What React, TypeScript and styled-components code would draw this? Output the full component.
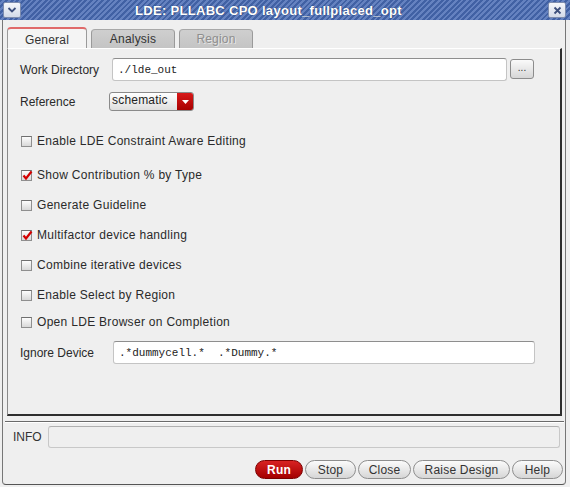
import React from 'react';
import styled, { createGlobalStyle } from 'styled-components';

const GlobalStyle = createGlobalStyle`
  html, body {
    margin: 0;
    padding: 0;
    background: #efefef;
  }
  body {
    font-family: 'Liberation Sans', Arial, sans-serif;
    font-size: 12px;
    color: #222;
  }
`;

const Window = styled.div`
  width: 570px;
  height: 487px;
  display: flex;
  flex-direction: column;
  background: #efefef;
  overflow: hidden;
`;

const TitleBar = styled.div`
  height: 20px;
  flex: none;
  display: flex;
  align-items: center;
  justify-content: space-between;
  padding: 0 4px 0 3px;
  background: repeating-linear-gradient(135deg, #4161a4 0 2px, #6582c0 2px 4px);
`;

const TitleText = styled.div`
  flex: 1;
  text-align: center;
  padding-right: 32px;
  color: #fff;
  font-weight: bold;
  font-size: 13px;
  letter-spacing: 0.3px;
  text-shadow: 0 0 1px #1c2f5a;
`;

const TitleButton = styled.div`
  width: 16px;
  height: 14px;
  border: 1px solid #7d8cae;
  border-radius: 2px;
  background: linear-gradient(#f5f7fb, #d3dae8);
  display: flex;
  align-items: center;
  justify-content: center;
`;

const Body = styled.div`
  flex: 1;
  margin: 0 4px 2px 2px;
  border-left: 1px solid #777;
  border-right: 1px solid #777;
  border-bottom: 1px solid #555;
  border-radius: 0 0 4px 4px;
  display: flex;
  flex-direction: column;
`;

const TabArea = styled.div`
  padding: 7px 3px 0 4px;
`;

const TabRow = styled.div`
  display: flex;
  align-items: flex-end;
  gap: 4px;
  height: 21px;
`;

const Tab = styled.div<{ $active?: boolean; $disabled?: boolean; $w: number }>`
  width: ${({ $w }) => $w}px;
  height: ${({ $active }) => ($active ? 21 : 19)}px;
  box-sizing: border-box;
  display: flex;
  align-items: center;
  justify-content: center;
  padding-top: ${({ $active }) => ($active ? 2 : 0)}px;
  border: 1px solid #9a9a9a;
  border-bottom: none;
  border-top: ${({ $active }) => ($active ? '2px solid #e06a6a' : '1px solid #a8a8a8')};
  border-radius: 4px 4px 0 0;
  background: ${({ $active }) => ($active ? '#f4f4f4' : 'linear-gradient(#cfcfcf, #c4c4c4)')};
  color: ${({ $disabled }) => ($disabled ? '#8e8e8e' : '#333')};
  text-shadow: ${({ $disabled }) => ($disabled ? '1px 1px 0 #e6e6e6' : 'none')};
  letter-spacing: 0.2px;
`;

const Panel = styled.div`
  height: 368px;
  box-sizing: border-box;
  border-top: 1px solid #fff;
  border-left: 1px solid #8a8a8a;
  border-right: 2px solid #2e2e2e;
  border-bottom: 2px solid #2e2e2e;
  padding: 9px 12px 0 12px;
  display: flex;
  flex-direction: column;
`;

const FieldRow = styled.div<{ $mt?: number }>`
  display: flex;
  align-items: center;
  margin-top: ${({ $mt }) => $mt ?? 0}px;
`;

const Label = styled.div<{ $w: number }>`
  width: ${({ $w }) => $w}px;
  flex: none;
  color: #2a2a2a;
`;

const TextInput = styled.div<{ $w: number }>`
  width: ${({ $w }) => $w}px;
  height: 23px;
  box-sizing: border-box;
  border: 1px solid #c4c4c4;
  border-top-color: #8e8e8e;
  border-radius: 3px;
  background: #fff;
  padding-left: 5px;
  display: flex;
  align-items: center;
  font-family: 'Liberation Mono', 'Courier New', monospace;
  font-size: 11px;
  color: #222;
  white-space: pre;
`;

const SmallButton = styled.div`
  width: 24px;
  height: 20px;
  box-sizing: border-box;
  margin-left: 3px;
  align-self: flex-start;
  margin-top: 1px;
  border: 1px solid #8c8c8c;
  border-radius: 3px;
  background: linear-gradient(#fafafa, #d6d6d6);
  display: flex;
  align-items: center;
  justify-content: center;
  font-size: 10px;
  color: #333;
  padding-bottom: 3px;
`;

const Select = styled.div`
  width: 85px;
  height: 19px;
  box-sizing: border-box;
  border: 1px solid #8a8a8a;
  border-radius: 3px;
  background: linear-gradient(#ffffff, #dedede);
  display: flex;
  overflow: hidden;
`;

const SelectText = styled.div`
  flex: 1;
  padding-left: 2px;
  line-height: 15px;
  color: #222;
  letter-spacing: 0.2px;
`;

const SelectArrow = styled.div`
  width: 16px;
  background: linear-gradient(#d81a1a, #a80000);
  display: flex;
  align-items: center;
  justify-content: center;
`;

const CheckRow = styled.div<{ $mt?: number }>`
  height: 30px;
  display: flex;
  align-items: center;
  gap: 5px;
  margin-top: ${({ $mt }) => $mt ?? 0}px;
  color: #2a2a2a;
  letter-spacing: 0.3px;
`;

const Box = styled.div`
  width: 11px;
  height: 11px;
  box-sizing: border-box;
  margin-left: 1px;
  border: 1px solid #8f8f8f;
  border-top-color: #6f6f6f;
  background: linear-gradient(#fdfdfd, #d8d8d8);
  position: relative;
`;

const CheckMark = styled.svg`
  position: absolute;
  left: 0;
  top: -1px;
`;

const Separator = styled.div`
  margin: 5px 1px 0 2px;
  border-top: 1px solid #6a6a6a;
  border-bottom: 1px solid #fff;
`;

const InfoRow = styled.div`
  display: flex;
  align-items: center;
  margin-top: 3px;
  padding: 0 5px 0 10px;
`;

const InfoLabel = styled.div`
  width: 35px;
  color: #333;
`;

const InfoField = styled.div`
  flex: 1;
  height: 22px;
  box-sizing: border-box;
  border: 1px solid #c8c8c8;
  border-top-color: #b0b0b0;
  border-radius: 3px;
  background: #efefef;
`;

const ButtonRow = styled.div`
  display: flex;
  justify-content: flex-end;
  gap: 2px;
  margin-top: 12px;
  padding-right: 2px;
`;

const PillButton = styled.div<{ $w: number; $primary?: boolean }>`
  width: ${({ $w }) => $w}px;
  height: 19px;
  box-sizing: border-box;
  border-radius: 10px;
  border: 1px solid ${({ $primary }) => ($primary ? '#7c0000' : '#8e8e8e')};
  background: ${({ $primary }) =>
    $primary ? 'linear-gradient(#d82222, #a40000)' : 'linear-gradient(#fbfbfb, #d6d6d6)'};
  color: ${({ $primary }) => ($primary ? '#fff' : '#333')};
  font-weight: ${({ $primary }) => ($primary ? 'bold' : 'normal')};
  letter-spacing: 0.2px;
  display: flex;
  align-items: center;
  justify-content: center;
`;

const checks: { label: string; checked: boolean; mt: number }[] = [
  { label: 'Enable LDE Constraint Aware Editing', checked: false, mt: 15 },
  { label: 'Show Contribution % by Type', checked: true, mt: 4 },
  { label: 'Generate Guideline', checked: false, mt: 0 },
  { label: 'Multifactor device handling', checked: true, mt: 0 },
  { label: 'Combine iterative devices', checked: false, mt: 0 },
  { label: 'Enable Select by Region', checked: false, mt: 0 },
  { label: 'Open LDE Browser on Completion', checked: false, mt: -3 },
];

const buttons = [
  { label: 'Run', w: 48, primary: true },
  { label: 'Stop', w: 51 },
  { label: 'Close', w: 53 },
  { label: 'Raise Design', w: 97 },
  { label: 'Help', w: 51 },
];

export default function App() {
  return (
    <>
      <GlobalStyle />
      <Window>
        <TitleBar>
          <TitleButton>
            <svg width="10" height="8" viewBox="0 0 10 8">
              <path d="M1.5 2 L5 5.5 L8.5 2" fill="none" stroke="#3d4f7c" strokeWidth="1.8" />
            </svg>
          </TitleButton>
          <TitleText>LDE: PLLABC CPO layout_fullplaced_opt</TitleText>
          <TitleButton>
            <svg width="9" height="9" viewBox="0 0 9 9">
              <path d="M1.5 1.5 L7.5 7.5 M7.5 1.5 L1.5 7.5" stroke="#3d4f7c" strokeWidth="1.8" />
            </svg>
          </TitleButton>
        </TitleBar>
        <Body>
          <TabArea>
            <TabRow>
              <Tab $active $w={80}>General</Tab>
              <Tab $w={84}>Analysis</Tab>
              <Tab $w={74} $disabled>Region</Tab>
            </TabRow>
            <Panel>
              <FieldRow>
                <Label $w={92}>Work Directory</Label>
                <TextInput $w={395}>./lde_out</TextInput>
                <SmallButton>...</SmallButton>
              </FieldRow>
              <FieldRow $mt={11}>
                <Label $w={89}>Reference</Label>
                <Select>
                  <SelectText>schematic</SelectText>
                  <SelectArrow>
                    <svg width="7" height="4" viewBox="0 0 7 4">
                      <path d="M0 0 H7 L3.5 4 Z" fill="#fff" />
                    </svg>
                  </SelectArrow>
                </Select>
              </FieldRow>
              {checks.map((c) => (
                <CheckRow key={c.label} $mt={c.mt}>
                  <Box>
                    {c.checked && (
                      <CheckMark width="11" height="11" viewBox="0 0 11 11">
                        <path d="M1.5 5.5 L4 8.5 L9.5 1.5" fill="none" stroke="#d40000" strokeWidth="2.2" />
                      </CheckMark>
                    )}
                  </Box>
                  {c.label}
                </CheckRow>
              ))}
              <FieldRow $mt={4}>
                <Label $w={93}>Ignore Device</Label>
                <TextInput $w={422}>.*dummycell.*  .*Dummy.*</TextInput>
              </FieldRow>
            </Panel>
          </TabArea>
          <Separator />
          <InfoRow>
            <InfoLabel>INFO</InfoLabel>
            <InfoField />
          </InfoRow>
          <ButtonRow>
            {buttons.map((b) => (
              <PillButton key={b.label} $w={b.w} $primary={b.primary}>
                {b.label}
              </PillButton>
            ))}
          </ButtonRow>
        </Body>
      </Window>
    </>
  );
}
